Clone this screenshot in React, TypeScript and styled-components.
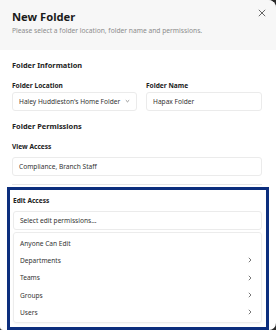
import styled, { createGlobalStyle } from "styled-components";

const GlobalStyle = createGlobalStyle`
  html, body {
    margin: 0;
    padding: 0;
    background: #2a2a2a;
  }
  body {
    font-family: "Noto Sans", "DejaVu Sans", sans-serif;
    -webkit-font-smoothing: antialiased;
  }
`;

const Modal = styled.div`
  width: 276px;
  height: 330px;
  background: #ffffff;
  border-radius: 0 8px 7px 3px;
  overflow: hidden;
  display: flex;
  flex-direction: column;
`;

const Header = styled.div`
  position: relative;
  height: 50px;
  box-sizing: border-box;
  padding: 10px 12px 0 12px;
  background: #f7f7f7;
  flex-shrink: 0;
`;

const Title = styled.h1`
  margin: 0;
  font-size: 11.2px;
  line-height: 14px;
  font-weight: 700;
  color: #1b1b1b;
`;

const Subtitle = styled.p`
  margin: 2px 0 0 0;
  font-size: 6.7px;
  line-height: 9px;
  color: #8c8c8c;
`;

const CloseButton = styled.button`
  position: absolute;
  top: 8px;
  right: 9px;
  width: 10px;
  height: 10px;
  padding: 0;
  border: none;
  background: transparent;
  display: flex;
  align-items: center;
  justify-content: center;
`;

const Body = styled.div`
  flex: 1;
  padding: 10px 14px 0 12px;
  display: flex;
  flex-direction: column;
`;

const SectionTitle = styled.h2<{ $top?: number }>`
  margin: ${(p) => p.$top ?? 0}px 0 0 0;
  font-size: 7.4px;
  line-height: 10px;
  font-weight: 700;
  color: #222;
`;

const Row = styled.div`
  display: grid;
  grid-template-columns: 125px 116px;
  column-gap: 9px;
  margin-top: 11px;
`;

const Field = styled.div<{ $top?: number }>`
  display: flex;
  flex-direction: column;
  margin-top: ${(p) => p.$top ?? 0}px;
`;

const Label = styled.label<{ $gap: number }>`
  font-size: 6.6px;
  line-height: 9px;
  font-weight: 700;
  color: #222;
  margin-bottom: ${(p) => p.$gap}px;
`;

const InputBox = styled.div`
  height: 19px;
  box-sizing: border-box;
  border: 1px solid #ebebeb;
  border-radius: 3px;
  padding: 0 6px;
  display: flex;
  align-items: center;
  justify-content: space-between;
  font-size: 6.6px;
  color: #333;
  background: #fff;
  white-space: nowrap;
`;

const Divider = styled.div`
  height: 1px;
  background: #e6e6e6;
  margin-top: 8px;
`;

const EditPanel = styled.div`
  margin: 2px -7px 0 -5px;
  flex: 1;
  border: 3px solid #0c2e7d;
  padding: 6px 4px 0 3px;
  display: flex;
  flex-direction: column;
`;

const Menu = styled.div`
  margin-top: 2px;
  border: 1px solid #ececec;
  border-radius: 3px;
  padding: 2px 0 0 0;
  height: 91px;
  box-sizing: border-box;
  box-shadow: 0 1px 2px rgba(0, 0, 0, 0.04);
`;

const MenuItem = styled.div`
  height: 17.3px;
  display: flex;
  align-items: center;
  justify-content: space-between;
  padding: 0 9px 0 6px;
  font-size: 6.6px;
  color: #333;
`;

const Chevron = () => (
  <svg width="4" height="6" viewBox="0 0 4 6">
    <path d="M0.8 0.8 L3 3 L0.8 5.2" fill="none" stroke="#555" strokeWidth="0.8" />
  </svg>
);

const DownChevron = () => (
  <svg width="5" height="4" viewBox="0 0 5 4">
    <path d="M0.8 1.2 L2.5 2.8 L4.2 1.2" fill="none" stroke="#666" strokeWidth="0.7" />
  </svg>
);

const items = [
  { name: "Anyone Can Edit", sub: false },
  { name: "Departments", sub: true },
  { name: "Teams", sub: true },
  { name: "Groups", sub: true },
  { name: "Users", sub: true },
];

const App = () => {
  return (
    <>
      <GlobalStyle />
      <Modal>
        <Header>
          <Title>New Folder</Title>
          <Subtitle>Please select a folder location, folder name and permissions.</Subtitle>
          <CloseButton aria-label="Close">
            <svg width="8" height="8" viewBox="0 0 8 8">
              <path d="M0.8 0.8 L7.2 7.2 M7.2 0.8 L0.8 7.2" stroke="#555" strokeWidth="0.9" />
            </svg>
          </CloseButton>
        </Header>
        <Body>
          <SectionTitle>Folder Information</SectionTitle>
          <Row>
            <Field>
              <Label $gap={1.5}>Folder Location</Label>
              <InputBox>
                <span>Haley Huddleston's Home Folder</span>
                <DownChevron />
              </InputBox>
            </Field>
            <Field>
              <Label $gap={1.5}>Folder Name</Label>
              <InputBox>Hapax Folder</InputBox>
            </Field>
          </Row>
          <SectionTitle $top={10}>Folder Permissions</SectionTitle>
          <Field $top={11.5}>
            <Label $gap={5.5}>View Access</Label>
            <InputBox>Compliance, Branch Staff</InputBox>
          </Field>
          <Divider />
          <EditPanel>
            <Label $gap={6}>Edit Access</Label>
            <InputBox>Select edit permissions...</InputBox>
            <Menu>
              {items.map((item) => (
                <MenuItem key={item.name}>
                  <span>{item.name}</span>
                  {item.sub && <Chevron />}
                </MenuItem>
              ))}
            </Menu>
          </EditPanel>
        </Body>
      </Modal>
    </>
  );
};

export default App;
